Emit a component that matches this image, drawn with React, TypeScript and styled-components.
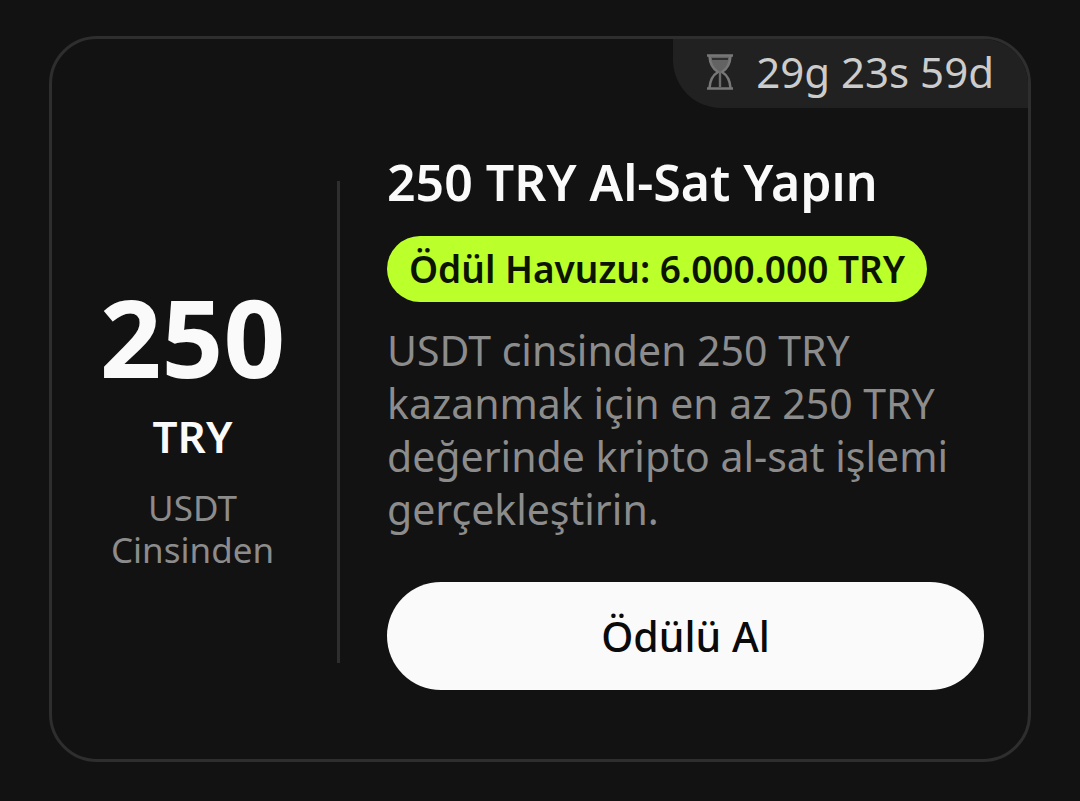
import React from 'react';
import styled, { createGlobalStyle } from 'styled-components';

const GlobalStyle = createGlobalStyle`
  * { box-sizing: border-box; }
  body {
    margin: 0;
    background: #121212;
    color: #fafafa;
    font-family: "Noto Sans", sans-serif;
  }
  h2, p { margin: 0; }
`;

const Page = styled.main`
  padding: 36px 49px 39px;
`;

const Card = styled.article`
  display: flex;
  flex-direction: column;
  border: 3px solid #2e2e2e;
  border-radius: 48px;
  overflow: hidden;
`;

const Countdown = styled.div`
  align-self: flex-end;
  display: flex;
  align-items: center;
  gap: 22px;
  height: 69px;
  padding: 0 34px 3px 33px;
  border-bottom-left-radius: 48px;
  background: #212121;
  color: #cccccc;
  font-size: 42px;
  line-height: 66px;
  white-space: nowrap;
`;

const Body = styled.div`
  display: grid;
  grid-template-columns: 285px 3px 1fr;
  padding: 50px 44px 69px 0;
`;

const Amount = styled.div`
  display: flex;
  flex-direction: column;
  justify-content: center;
  padding: 4px 44px 0 40px;
  text-align: center;
`;

const AmountValue = styled.p`
  font-size: 108px;
  font-weight: 700;
  line-height: 110px;
`;

const AmountUnit = styled.p`
  margin-top: 14px;
  font-size: 44px;
  font-weight: 600;
  line-height: 60px;
`;

const AmountNote = styled.p`
  margin-top: 21px;
  color: #8c8c8c;
  font-size: 35px;
  line-height: 42px;
`;

const Divider = styled.div`
  margin: 23px 0 27px;
  background: #2e2e2e;
`;

const Details = styled.div`
  display: flex;
  flex-direction: column;
  align-items: flex-start;
  padding-left: 47px;
`;

const Title = styled.h2`
  font-size: 50px;
  font-weight: 600;
  line-height: 48px;
`;

const Pool = styled.p`
  margin-top: 30px;
  padding: 0 22px;
  border-radius: 33px;
  background: #bbff2b;
  color: #0c1400;
  font-size: 37px;
  font-weight: 600;
  line-height: 66px;
  white-space: nowrap;
`;

const Description = styled.p`
  margin-top: 22px;
  color: #8c8c8c;
  font-size: 41px;
  line-height: 53px;
`;

const ClaimButton = styled.button`
  width: 100%;
  height: 108px;
  margin-top: 46px;
  padding: 0;
  border: 0;
  border-radius: 54px;
  background: #fafafa;
  color: #0a0a0a;
  font: 500 41px "Noto Sans", sans-serif;
  cursor: pointer;
`;

const Hourglass = () => (
  <svg width="28" height="36" viewBox="0 0 28 36" fill="none" aria-hidden="true">
    <path d="M3.500 2C4 10 7 15 12 18h4c5-3 8-8 8.500-16z" fill="#636363" />
    <path d="M6 5h16" stroke="#303030" strokeWidth="2.200" />
    <path
      d="M3.500 2C4 10 7 15 12 18 7 21 4 26 3.500 34M24.500 2C24 10 21 15 16 18c5 3 8 8 8.500 16"
      stroke="#777777"
      strokeWidth="2.600"
    />
    <path d="M14 17v16" stroke="#6c6c6c" strokeWidth="2.400" />
    <path d="M1 1.500h26M1 34.500h26" stroke="#777777" strokeWidth="2.600" />
  </svg>
);

export default function App() {
  return (
    <Page>
      <GlobalStyle />
      <Card>
        <Countdown>
          <Hourglass />
          <span>29g 23s 59d</span>
        </Countdown>
        <Body>
          <Amount>
            <AmountValue>250</AmountValue>
            <AmountUnit>TRY</AmountUnit>
            <AmountNote>USDT Cinsinden</AmountNote>
          </Amount>
          <Divider />
          <Details>
            <Title>250 TRY Al-Sat Yapın</Title>
            <Pool>Ödül Havuzu: 6.000.000 TRY</Pool>
            <Description>
              USDT cinsinden 250 TRY kazanmak için en az 250 TRY değerinde kripto al-sat işlemi gerçekleştirin.
            </Description>
            <ClaimButton type="button">Ödülü Al</ClaimButton>
          </Details>
        </Body>
      </Card>
    </Page>
  );
}
